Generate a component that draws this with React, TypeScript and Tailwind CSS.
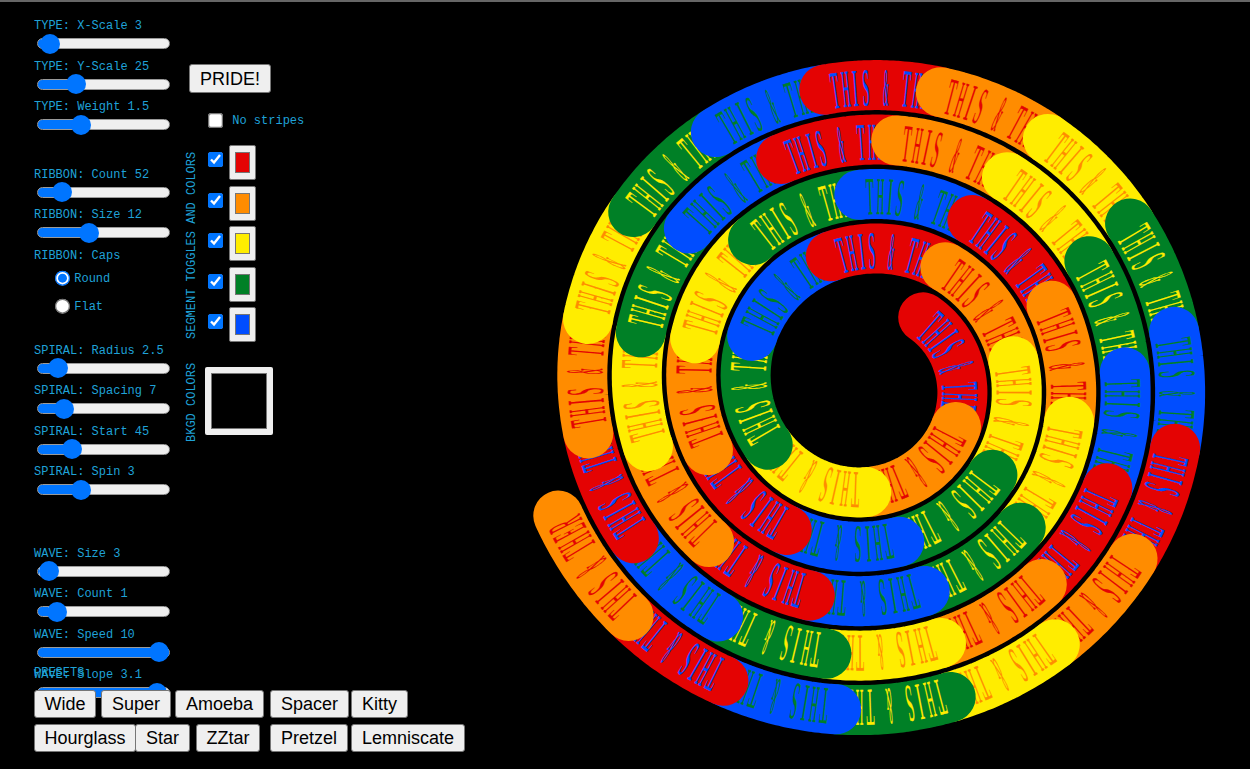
import { useMemo } from "react";

const PRIDE = ["#e40303", "#ff8c00", "#ffed00", "#008026", "#004dff"];
const LABEL = "text-[12px] leading-[16px] text-[#1fa2d8] font-['Liberation_Mono',monospace]";

// spiral geometry, px inside the svg
const CX = 347.6;
const CY = 382;
const R0 = 94.4;
const B = 8.674;
const TH_START = -0.88;
const TH_END = 27.87;
const SEGMENTS = 52;
const WORD = "THIS & THER";
const ADVANCE = 10.2;
const FONT = 53;

// glyph width in px along the ribbon, squeezed to look like the tall thin type
const GLYPH: Record<string, number> = {
  T: 0.611,
  H: 0.722,
  I: 0.333,
  S: 0.556,
  "&": 0.778,
  E: 0.611,
  R: 0.667,
};
const TARGET: Record<string, number> = { T: 8, H: 7.5, I: 5, S: 7, "&": 5.5, E: 7, R: 7.5 };

function buildTable() {
  const table: { th: number; s: number }[] = [];
  let s = 0;
  const step = 0.004;
  for (let th = TH_START; th <= TH_END + step; th += step) {
    table.push({ th, s });
    const r = R0 + B * th;
    s += Math.sqrt(r * r + B * B) * step;
  }
  return table;
}

function pointAt(th: number) {
  const r = R0 + B * th;
  const x = CX + r * Math.cos(th);
  const y = CY + r * Math.sin(th);
  const dx = B * Math.cos(th) - r * Math.sin(th);
  const dy = B * Math.sin(th) + r * Math.cos(th);
  return { x, y, deg: (Math.atan2(dy, dx) * 180) / Math.PI };
}

function Spiral() {
  const segments = useMemo(() => {
    const table = buildTable();
    const total = table[table.length - 1].s;
    const len = total / SEGMENTS - 0.24;
    const thAt = (s: number) => {
      let lo = 0;
      let hi = table.length - 1;
      while (hi - lo > 1) {
        const mid = (lo + hi) >> 1;
        if (table[mid].s < s) lo = mid;
        else hi = mid;
      }
      return table[hi].th;
    };
    const startOf = (i: number) => {
      if (i === 0) return 0;
      if (i === SEGMENTS) return total;
      const raw = 6 + i * len;
      const th = thAt(raw);
      return raw - 1.75 + 1.5 * Math.cos(th) + 3 * Math.sin(th);
    };
    return Array.from({ length: SEGMENTS }, (_, i) => {
      const a = startOf(i);
      const b = startOf(i + 1);
      let d = "";
      for (let k = 0; k <= 40; k++) {
        const p = pointAt(thAt(a + ((b - a) * k) / 40));
        d += `${k ? "L" : "M"}${p.x.toFixed(1)} ${p.y.toFixed(1)}`;
      }
      const glyphs = WORD.split("").map((ch, j) => ({
        ch,
        ...pointAt(thAt(a + 6 + (j + 0.5) * ADVANCE)),
      }));
      return { d, glyphs, color: PRIDE[i % 5], ink: PRIDE[(i + 4) % 5] };
    });
  }, []);

  return (
    <svg width="730" height="767" viewBox="0 0 730 767" className="block shrink-0">
      {segments.map((seg, i) => (
        <g key={i}>
          <path d={seg.d} fill="none" stroke={seg.color} strokeWidth="50" strokeLinecap="round" />
          {seg.glyphs.map((g, j) =>
            g.ch === " " ? null : (
              <text
                key={j}
                transform={`translate(${g.x.toFixed(1)} ${g.y.toFixed(1)}) rotate(${g.deg.toFixed(1)}) scale(${(TARGET[g.ch] / (GLYPH[g.ch] * FONT)).toFixed(3)} 1)`}
                y="20"
                fontSize={FONT}
                textAnchor="middle"
                fill={seg.ink}
                stroke={seg.ink}
                strokeWidth="0.3"
                vectorEffect="non-scaling-stroke"
                fontFamily="'Liberation Serif', serif"
              >
                {g.ch}
              </text>
            ),
          )}
        </g>
      ))}
    </svg>
  );
}

function Slider({ label, value }: { label: string; value: number }) {
  return (
    <div className="h-[40.5px]">
      <div className={LABEL}>{label}</div>
      <input
        type="range"
        readOnly
        value={value}
        style={{
          background: `linear-gradient(to right, #0075ff ${value}%, #efefef ${value}%)`,
        }}
        className="mt-[4px] ml-[3px] block h-[11px] w-[133px] appearance-none rounded-full border border-[#9a9a9a] [&::-webkit-slider-thumb]:h-[20px] [&::-webkit-slider-thumb]:w-[20px] [&::-webkit-slider-thumb]:appearance-none [&::-webkit-slider-thumb]:rounded-full [&::-webkit-slider-thumb]:bg-[#0075ff]"
      />
    </div>
  );
}

function Swatch({ color }: { color: string }) {
  return (
    <div className="flex h-[35px] w-[27px] items-center justify-center rounded-[2px] border border-[#767676] bg-[#efefef]">
      <div className="h-[21px] w-[15px] border border-[#767676]" style={{ backgroundColor: color }} />
    </div>
  );
}

const row1 = [
  ["Wide", 62, 0],
  ["Super", 70, 5],
  ["Amoeba", 89, 4],
  ["Spacer", 79, 6],
  ["Kitty", 57, 2],
] as const;
const row2 = [
  ["Hourglass", 102, 0],
  ["Star", 55, -1],
  ["ZZtar", 64, 6],
  ["Pretzel", 78, 10],
  ["Lemniscate", 114, 3],
] as const;

function PresetRow({ items }: { items: readonly (readonly [string, number, number])[] }) {
  return (
    <div className="flex h-[28px]">
      {items.map(([name, w, gap]) => (
        <button
          key={name}
          className="h-[28px] rounded-[3px] border border-[#767676] bg-[#efefef] text-center text-[18px] leading-[20px] text-black font-['Liberation_Sans',Arial,sans-serif]"
          style={{ width: w, marginLeft: gap }}
        >
          {name}
        </button>
      ))}
    </div>
  );
}

export default function App() {
  return (
    <div className="relative flex h-[769px] w-full overflow-hidden border-t-2 border-[#666666] bg-black">
      {/* sliders */}
      <div className="w-[189px] shrink-0 pl-[34px] pt-[16px]">
        <Slider label="TYPE: X-Scale 3" value={2} />
        <Slider label="TYPE: Y-Scale 25" value={25} />
        <Slider label="TYPE: Weight 1.5" value={30} />

        <div className="mt-[27px]">
          <Slider label="RIBBON: Count 52" value={13} />
          <Slider label="RIBBON: Size 12" value={37} />
          <div className={LABEL}>RIBBON: Caps</div>
          <label className={`${LABEL} mt-[7px] flex h-[16px] items-center pl-[21px]`}>
            <input type="radio" name="caps" defaultChecked className="m-0 [zoom:1.25]" />
            <span className="ml-[3px]">Round</span>
          </label>
          <label className={`${LABEL} mt-[12px] flex h-[16px] items-center pl-[21px]`}>
            <input type="radio" name="caps" className="m-0 [zoom:1.25]" />
            <span className="ml-[3px]">Flat</span>
          </label>
        </div>

        <div className="mt-[28px]">
          <Slider label="SPIRAL: Radius 2.5" value={9} />
          <Slider label="SPIRAL: Spacing 7" value={14} />
          <Slider label="SPIRAL: Start 45" value={22} />
          <Slider label="SPIRAL: Spin 3" value={30} />
        </div>

        <div className="mt-[41px]">
          <Slider label="WAVE: Size 3" value={1} />
          <Slider label="WAVE: Count 1" value={8} />
          <Slider label="WAVE: Speed 10" value={100} />
          <Slider label="WAVE: Slope 3.1" value={98} />
        </div>
      </div>

      {/* toggles */}
      <div className="w-[331px] shrink-0 pt-[62px]">
        <button className="h-[29px] w-[82px] rounded-[3px] border border-[#767676] bg-[#efefef] text-[18px] leading-[20px] text-black font-['Liberation_Sans',Arial,sans-serif]">
          PRIDE!
        </button>
        <label className={`${LABEL} mt-[20px] ml-[19px] flex items-center`}>
          <input type="checkbox" className="m-0 [zoom:1.25]" />
          <span className="ml-[8px]">No stripes</span>
        </label>
        <div className="mt-[16px] flex">
          <div className={`${LABEL} -ml-[5px] mt-[3px] h-[195px] w-[16px] rotate-180 text-center [writing-mode:vertical-rl]`}>
            SEGMENT TOGGLES AND COLORS
          </div>
          <div className="ml-[8px] flex flex-col gap-[5.5px]">
            {PRIDE.map((c) => (
              <div key={c} className="flex items-center">
                <input type="checkbox" defaultChecked className="-mt-[4px] m-0 [zoom:1.25]" />
                <div className="ml-[5px]">
                  <Swatch color={c} />
                </div>
              </div>
            ))}
          </div>
        </div>
        <div className="mt-[24px] flex">
          <div className={`${LABEL} -ml-[5px] -mt-[7px] h-[84px] w-[16px] rotate-180 text-center [writing-mode:vertical-rl]`}>
            BKGD COLORS
          </div>
          <div className="ml-[5px] h-[68px] w-[68px] rounded-[2px] bg-[#efefef] p-[6px]">
            <div className="h-full w-full border border-[#767676] bg-black" />
          </div>
        </div>
      </div>

      <Spiral />

      {/* presets sit on top of the last slider, as in the app */}
      <div className="absolute left-[34px] top-[663px]">
        <div className={LABEL}>PRESETS</div>
        <div className="mt-[9px] flex flex-col gap-[6px]">
          <PresetRow items={row1} />
          <PresetRow items={row2} />
        </div>
      </div>
    </div>
  );
}
